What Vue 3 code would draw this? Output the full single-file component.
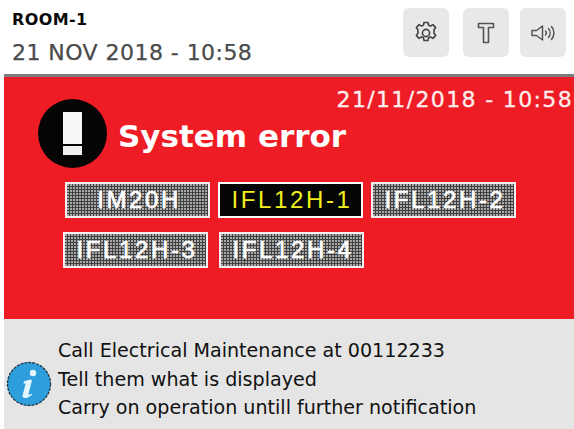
<script setup>
const rows = [
  { cls: 'row-a', items: [{ t: 'IM20H' }, { t: 'IFL12H-1', active: true }, { t: 'IFL12H-2' }] },
  { cls: 'row-b', items: [{ t: 'IFL12H-3' }, { t: 'IFL12H-4' }] }
]
const notes = [
  'Call Electrical Maintenance at 00112233',
  'Tell them what is displayed',
  'Carry on operation untill further notification'
]
</script>

<template>
  <div class="screen">
    <header class="top">
      <div class="titles">
        <div class="room">ROOM-1</div>
        <div class="date">21 NOV 2018 - 10:58</div>
      </div>
      <div class="tools">
        <button class="tool">
          <svg width="24" height="24" viewBox="0 0 24 24" fill="none" stroke="#444" stroke-width="1.6" stroke-linejoin="round">
            <path d="M10 1.500h4l.6 2.800 1.900.8 2.400-1.500 2.800 3-1.800 2.300.3 1.600-.3 1.600 1.800 2.300-2.800 3-2.400-1.500-1.900.8-.6 2.800h-4l-.6-2.800-1.900-.8-2.400 1.500-2.800-3 1.800-2.300-.3-1.600.3-1.600-1.800-2.300 2.800-3 2.400 1.500 1.900-.8z"/>
            <circle cx="12" cy="12" r="3.600"/>
          </svg>
        </button>
        <button class="tool tool-t">
          <svg width="18" height="22" viewBox="0 0 18 22" fill="none" stroke="#555" stroke-width="1.600" stroke-linejoin="round">
            <path d="M1.500 1.500h15v4h-5v15h-5v-15h-5z"/>
          </svg>
        </button>
        <button class="tool">
          <svg width="26" height="20" viewBox="0 0 26 20" fill="none" stroke="#555" stroke-width="1.500" stroke-linejoin="round" stroke-linecap="round">
            <path d="M2 7.500h4.500l6-4.500v14l-6-4.500h-4.500z"/>
            <path d="M15.500 8a3 3 0 0 1 0 4"/>
            <path d="M18.500 5.500a7 7 0 0 1 0 9"/>
            <path d="M21.500 3.500a10 10 0 0 1 0 13"/>
          </svg>
        </button>
      </div>
    </header>

    <main class="body">
      <section class="alarm">
        <div class="stamp">21/11/2018 - 10:58</div>
        <div class="headline">
          <div class="badge">
            <span class="bar"></span>
            <span class="dot"></span>
          </div>
          <h1 class="message">System error</h1>
        </div>
        <div class="rows">
          <div v-for="row in rows" :key="row.cls" class="row" :class="row.cls">
            <div v-for="item in row.items" :key="item.t" class="chip" :class="{ active: item.active }">{{ item.t }}</div>
          </div>
        </div>
      </section>
      <section class="info">
        <svg class="info-icon" width="46" height="48" viewBox="0 0 46 48">
          <circle cx="23" cy="24" r="21.500" fill="#2e9fdc" stroke="#1d3a4c" stroke-width="1.300" stroke-dasharray="3 1"/>
          <circle cx="27" cy="13" r="3.200" fill="#e6f6ff"/>
          <path d="M18 21.500c3-1.500 6.500-2 8-1.500l-3.500 14c-.2 1 .5 1.300 3-.3l.5 1c-3 2.500-5.500 3.500-7.500 3.300-1.700-.3-2.200-1.500-1.800-3l3-11.500-2.200.3z" fill="#e6f6ff"/>
        </svg>
        <div class="notes">
          <div v-for="n in notes" :key="n" class="note">{{ n }}</div>
        </div>
      </section>
    </main>
  </div>
</template>

<style>
html, body { margin: 0; background: #fff; overflow: hidden; }
</style>

<style scoped>
.screen {
  width: 574px;
  height: 429px;
  display: flex;
  flex-direction: column;
  background: #fff;
  font-family: "DejaVu Sans", "Liberation Sans", sans-serif;
  overflow: hidden;
}
.top {
  height: 74px;
  box-sizing: border-box;
  padding: 8px 8px 0 12px;
  display: flex;
  justify-content: space-between;
}
.room {
  margin-top: 3px;
  font-size: 16px;
  line-height: 18px;
  font-weight: 700;
  letter-spacing: 0.400px;
  color: #0a0a0a;
}
.date {
  margin-top: 12px;
  font-size: 22px;
  line-height: 24px;
  letter-spacing: 0.450px;
  color: #4a4a4a;
  -webkit-text-stroke: 0.250px #4a4a4a;
  white-space: nowrap;
}
.tools {
  display: flex;
  gap: 14px;
  height: 49px;
}
.tool {
  width: 46px;
  height: 49px;
  padding: 0;
  border: 0;
  border-radius: 6px;
  background: #e8e8e8;
  display: flex;
  align-items: center;
  justify-content: center;
}
.tool-t { margin-right: -3px; }
.body {
  flex: 1;
  display: flex;
  flex-direction: column;
  margin-left: 4px;
  border-top: 3px solid #7c7c7c;
  min-height: 0;
}
.alarm {
  height: 242px;
  background: #ee1c25;
  position: relative;
  box-sizing: border-box;
}
.stamp {
  position: absolute;
  top: 10px;
  right: 1px;
  font-size: 22px;
  line-height: 26px;
  letter-spacing: 1.350px;
  color: #fdeeee;
  -webkit-text-stroke: 0.300px #fdeeee;
  white-space: nowrap;
}
.headline {
  display: flex;
  align-items: center;
  padding: 22px 0 0 34px;
  gap: 11px;
}
.badge {
  width: 69px;
  height: 69px;
  border-radius: 50%;
  background: #050505;
  display: flex;
  flex-direction: column;
  align-items: center;
  box-sizing: border-box;
  padding-top: 13px;
}
.bar {
  width: 19px;
  height: 32px;
  background: #f7f7f7;
}
.dot {
  margin-top: 2px;
  width: 19px;
  height: 9px;
  background: #f0f0f0;
}
.message {
  margin: 5px 0 0;
  font-size: 31px;
  line-height: 36px;
  font-weight: 700;
  color: #fff;
  white-space: nowrap;
}
.rows {
  margin-top: 14px;
  display: flex;
  flex-direction: column;
  gap: 14px;
}
.row { display: flex; }
.row-a { padding-left: 61px; gap: 8px; }
.row-b { padding-left: 59px; gap: 11px; }
.chip {
  width: 145px;
  height: 36px;
  box-sizing: border-box;
  padding-left: 3px;
  border: 2px solid #f6eeee;
  display: flex;
  align-items: center;
  justify-content: center;
  font-family: "Liberation Sans", sans-serif;
  font-size: 24px;
  letter-spacing: 2.600px;
  color: #fff;
  -webkit-text-stroke: 0.700px #fff;
  background-color: #404040;
  background-image: radial-gradient(circle at 1px 1px, #a8a8a8 1px, transparent 1.100px);
  background-size: 3px 3px;
}
.chip.active {
  background: #050505;
  color: #f3f01e;
  border-color: #fff;
  -webkit-text-stroke: 0;
}
.info {
  flex: 1;
  background: #e5e5e5;
  display: flex;
  align-items: flex-start;
  padding: 18px 0 0 2px;
  position: relative;
}
.info-icon {
  margin-top: 23px;
  margin-right: 6px;
  flex: none;
}
.notes { color: #111; }
.note {
  font-size: 19.100px;
  line-height: 28.500px;
  white-space: nowrap;
}
</style>
